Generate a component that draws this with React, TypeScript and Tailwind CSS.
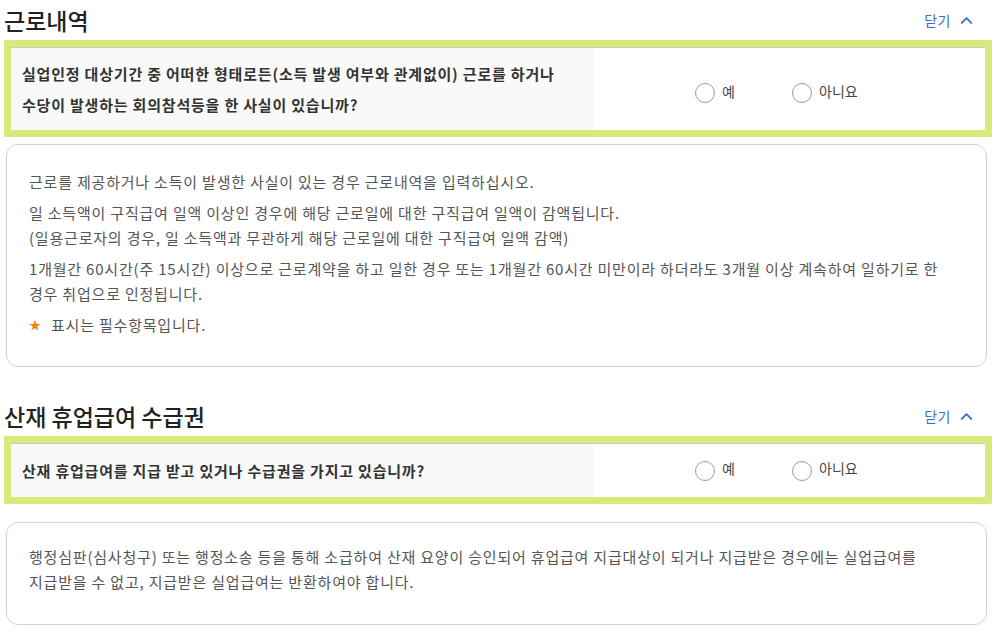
import { ChevronUp } from "lucide-react";

const font = { fontFamily: '"Noto Sans CJK KR", "Noto Sans", sans-serif' };

function SectionHead({ title }: { title: string }) {
  return (
    <div className="flex h-[40px] items-center justify-between">
      <h2 className="text-[23px] leading-[32px] font-medium text-[#222]">{title}</h2>
      <button className="flex items-center gap-[6px] pr-[16px] text-[14px] tracking-[0.5px] text-[#3d6fc7]">
        닫기
        <ChevronUp size={19} strokeWidth={2.5} />
      </button>
    </div>
  );
}

function Radio({ label }: { label: string }) {
  return (
    <label className="flex items-center gap-[7px] text-[14px] text-[#444]">
      <span className="block h-[20px] w-[20px] rounded-full border border-[#9a9a9a] bg-white" />
      <span className="-mt-[4px]">{label}</span>
    </label>
  );
}

function Question({ lines, h, offset }: { lines: string[]; h: string; offset: string }) {
  return (
    <div className="border-[7px] border-[#d6eb7b]">
      <div className={`flex border-t border-[#c9c9c9] ${h}`}>
        <div className="flex w-[583px] flex-col justify-center bg-[#f9f9f9] pl-[11px] text-[15px] font-bold leading-[31px] tracking-[0.8px] text-[#333]">
          {lines.map((l) => (
            <p key={l}>{l}</p>
          ))}
        </div>
        <div className={`flex flex-1 items-center bg-white pl-[101px] ${offset}`}>
          <div className="w-[97px]">
            <Radio label="예" />
          </div>
          <Radio label="아니요" />
        </div>
      </div>
    </div>
  );
}

export default function App() {
  return (
    <div className="h-[636px] w-[995px] overflow-hidden bg-white pl-[4px] pr-[3px]" style={font}>
      <SectionHead title="근로내역" />
      <Question
        h="h-[83px]"
        offset="pt-[8px]"
        lines={[
          "실업인정 대상기간 중 어떠한 형태로든(소득 발생 여부와 관계없이) 근로를 하거나",
          "수당이 발생하는 회의참석등을 한 사실이 있습니까?",
        ]}
      />
      <div className="ml-[2px] mr-[5px] mt-[7px] flex h-[223px] flex-col gap-[6px] rounded-[12px] border border-[#d2d2d2] pl-[22px] pt-[24px] text-[15px] leading-[25px] tracking-[0.8px] text-[#555]">
        <p>근로를 제공하거나 소득이 발생한 사실이 있는 경우 근로내역을 입력하십시오.</p>
        <p>
          일 소득액이 구직급여 일액 이상인 경우에 해당 근로일에 대한 구직급여 일액이 감액됩니다.
          <br />
          (일용근로자의 경우, 일 소득액과 무관하게 해당 근로일에 대한 구직급여 일액 감액)
        </p>
        <p>
          1개월간 60시간(주 15시간) 이상으로 근로계약을 하고 일한 경우 또는 1개월간 60시간 미만이라 하더라도 3개월 이상 계속하여 일하기로 한
          <br />
          경우 취업으로 인정됩니다.
        </p>
        <p className="flex items-center">
          <span className="w-[22px] text-[12px] text-[#f07d1e]">★</span>
          표시는 필수항목입니다.
        </p>
      </div>

      <div className="mt-[29px]">
        <SectionHead title="산재 휴업급여 수급권" />
      </div>
      <Question h="h-[54px]" offset="" lines={["산재 휴업급여를 지급 받고 있거나 수급권을 가지고 있습니까?"]} />
      <div className="ml-[2px] mr-[5px] mt-[18px] h-[103px] rounded-[12px] border border-[#d2d2d2] pl-[22px] pt-[21px] text-[15px] leading-[25px] tracking-[0.8px] text-[#555]">
        <p>
          행정심판(심사청구) 또는 행정소송 등을 통해 소급하여 산재 요양이 승인되어 휴업급여 지급대상이 되거나 지급받은 경우에는 실업급여를
          <br />
          지급받을 수 없고, 지급받은 실업급여는 반환하여야 합니다.
        </p>
      </div>
    </div>
  );
}
